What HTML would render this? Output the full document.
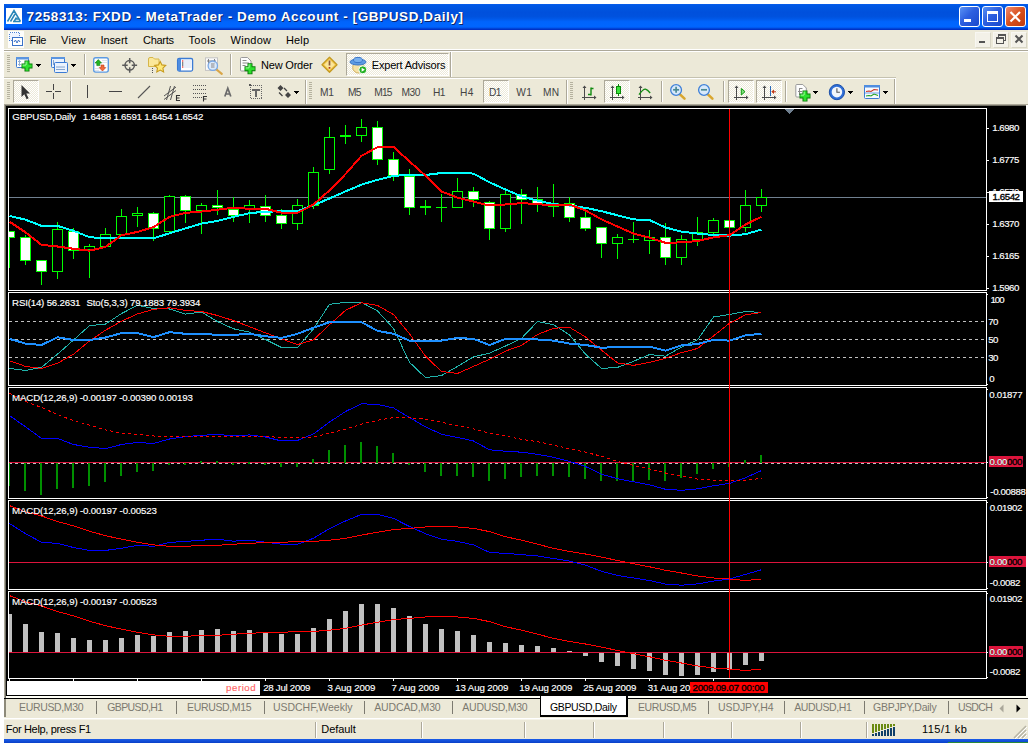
<!DOCTYPE html>
<html><head><meta charset="utf-8"><title>MetaTrader</title><style>
html,body{margin:0;padding:0;background:#fff}
body{width:1032px;height:743px;position:relative;overflow:hidden;font-family:"Liberation Sans",sans-serif;font-size:11px}
.abs{position:absolute}
svg{position:absolute;overflow:visible}
#title{position:absolute;left:4px;top:4px;width:1024px;height:26px;background:linear-gradient(#0a5eea 0%,#0058e6 5%,#0055e0 16%,#0050dc 32%,#0052de 48%,#0058e8 57%,#0064fc 68%,#0066ff 86%,#0058f0 91%,#0040d0 95%,#0028c0 100%)}
#ttext{position:absolute;left:27px;top:8px;font:bold 13px "Liberation Sans",sans-serif;color:#fff;text-shadow:1px 1px 0 #0a2a80;white-space:nowrap;letter-spacing:0.55px}
.cap{position:absolute;top:6px;width:21px;height:21px;box-sizing:border-box;border:1px solid #fff;border-radius:3px;background:linear-gradient(135deg,#5a92f4,#2d5fe0 45%,#1a48cc)}
.capx{background:linear-gradient(135deg,#f08a70,#d8501c 50%,#c03c10)}
#menubar{position:absolute;left:4px;top:30px;width:1024px;height:20px;background:#ece9d8}
.mi{position:absolute;top:33px;font-size:11px;color:#000;white-space:nowrap;line-height:14px}
.mdib{position:absolute;top:32px;width:16px;height:16px;background:#f3f1e8;box-sizing:border-box;border:1px solid #f8f7f2;border-right-color:#d8d5c5;border-bottom-color:#d8d5c5}
.grip{position:absolute;width:3px;height:18px;background:repeating-linear-gradient(#b5b29f 0 1px,#ece9d8 1px 2px)}
.sep{position:absolute;width:1px;height:19px;background:#aca899;box-shadow:1px 0 0 #fff}
.vsep{position:absolute;width:1px;background:#aca899;box-shadow:1px 0 0 #fff}
.dd{position:absolute;width:0;height:0;border-left:3px solid transparent;border-right:3px solid transparent;border-top:3px solid #000}
.tbt{position:absolute;font-size:11px;color:#000;white-space:nowrap;line-height:14px}
.pressed{position:absolute;box-sizing:border-box;border:1px solid #fff;border-top-color:#aca899;border-left-color:#aca899;background:repeating-conic-gradient(#fff 0% 25%,#ece9d8 0% 50%) 0 0/2px 2px}
.per{position:absolute;top:86px;font-size:10px;color:#555;white-space:nowrap;line-height:13px}
.t{position:absolute;line-height:14px;white-space:pre}
.ct{font-size:9.7px;-webkit-text-stroke:0.15px}
.ui{font-size:11px}
.tab{font-size:10.5px}
.pe{font-size:10.2px}
.ttl{font-size:13.5px;font-weight:bold}
.tsep{position:absolute;top:701px;width:1px;height:13px;background:#7c7a70}
.st{position:absolute;top:723px;font-size:11px;line-height:14px;color:#000;white-space:nowrap}
.ssep{position:absolute;top:722px;width:1px;height:16px;background:#aca899;box-shadow:1px 0 0 #fff}
</style></head><body>
<!-- title bar -->
<div id="title"></div>
<div class="abs" style="left:6px;top:8px;width:16px;height:16px;background:#fff"></div>
<svg style="left:6px;top:8px" width="16" height="16" viewBox="0 0 16 16"><path d="M1.500 13.500 L8 2.500 L14.500 13.500 M4.500 13.500 L9 6 M8 13.500 L10.500 9.500 M7 13.500 H14.500 M9.500 11 H12.800" stroke="#2a86b8" stroke-width="1.500" fill="none"/></svg>
<!-- caption buttons -->
<div class="cap" style="left:959px"></div>
<div class="abs" style="left:964px;top:19px;width:7px;height:3px;background:#fff"></div>
<div class="cap" style="left:982px"></div>
<div class="abs" style="left:987px;top:11px;width:11px;height:11px;box-sizing:border-box;border:1px solid #fff;border-top-width:3px"></div>
<div class="cap capx" style="left:1005px"></div>
<svg style="left:1005px;top:6px" width="21" height="21" viewBox="0 0 21 21"><path d="M5.500 6 L15 15.500 M15 6 L5.500 15.500" stroke="#fff" stroke-width="2.200" fill="none"/></svg>
<!-- menu bar -->
<div id="menubar"></div>
<div class="abs" style="left:8px;top:31px;width:16px;height:17px;background:#fdfdfb"></div>
<svg style="left:9px;top:32px" width="15" height="15" viewBox="0 0 15 15" shape-rendering="crispEdges"><rect x="0.500" y="0.500" width="10" height="8" fill="#eef4ff" stroke="#4a82d8" stroke-dasharray="1,1"/><rect x="3.500" y="5.500" width="10" height="8" fill="#fff" stroke="#3a72c8"/><path d="M5 10 l1.500 -2 l1.500 3 l1.500 -3 l1.500 2" stroke="#3a72c8" fill="none" shape-rendering="auto"/></svg>
<!-- mdi buttons -->
<div class="mdib" style="left:975px"></div><div class="abs" style="left:979px;top:41px;width:6px;height:2px;background:#555"></div>
<div class="mdib" style="left:993px"></div>
<div class="abs" style="left:998px;top:34px;width:8px;height:7px;border:1px solid #555;border-top-width:2px;box-sizing:border-box"></div>
<div class="abs" style="left:996px;top:37px;width:8px;height:7px;border:1px solid #555;border-top-width:2px;box-sizing:border-box;background:#f3f1e8"></div>
<div class="mdib" style="left:1011px"></div>
<svg style="left:1014px;top:34px" width="10" height="10" viewBox="0 0 10 10"><path d="M1.500 1.500 L8.500 8.500 M8.500 1.500 L1.500 8.500" stroke="#555" stroke-width="2" fill="none"/></svg>

<div class="abs" style="left:4px;top:50px;width:1024px;height:55px;background:#ece9d8"></div>
<div class="abs" style="left:4px;top:50px;width:1024px;height:1px;background:#aca899"></div>
<div class="abs" style="left:4px;top:51px;width:1024px;height:1px;background:#fff"></div>
<div class="abs" style="left:4px;top:49px;width:1024px;height:1px;background:#fff"></div>
<div class="abs" style="left:4px;top:77px;width:892px;height:1px;background:#c5c2b0"></div>
<div class="abs" style="left:4px;top:78px;width:892px;height:1px;background:#fff"></div>
<div class="abs" style="left:450px;top:52px;width:1px;height:25px;background:#aca899"></div>
<div class="abs" style="left:451px;top:52px;width:1px;height:25px;background:#fff"></div>
<div class="abs" style="left:894px;top:79px;width:1px;height:25px;background:#aca899"></div>
<div class="abs" style="left:895px;top:79px;width:1px;height:25px;background:#fff"></div>
<div class="grip" style="left:7px;top:55px"></div>
<div class="grip" style="left:7px;top:82px"></div>
<div class="grip" style="left:309px;top:82px"></div>
<div class="grip" style="left:570px;top:82px"></div>
<div class="vsep" style="left:305px;top:80px;height:24px"></div>
<div class="vsep" style="left:566px;top:80px;height:24px"></div>
<div class="sep" style="left:84px;top:54px;height:21px"></div>
<div class="sep" style="left:230px;top:54px;height:21px"></div>
<div class="sep" style="left:70px;top:81px;height:21px"></div>
<div class="sep" style="left:661px;top:81px;height:21px"></div>
<div class="sep" style="left:723px;top:81px;height:21px"></div>
<div class="sep" style="left:785px;top:81px;height:21px"></div>
<div class="pressed" style="left:346px;top:53px;width:103px;height:23px"></div>
<div class="pressed" style="left:13px;top:80px;width:26px;height:23px"></div>
<div class="pressed" style="left:483px;top:80px;width:26px;height:23px"></div>
<div class="pressed" style="left:604px;top:80px;width:26px;height:23px"></div>
<div class="pressed" style="left:728px;top:80px;width:26px;height:23px"></div>
<div class="pressed" style="left:756px;top:80px;width:26px;height:23px"></div>
<svg width="1032" height="743" viewBox="0 0 1032 743" style="left:0;top:0"><rect x="16.5" y="57.5" width="12" height="10" rx="1" fill="#fff" stroke="#3b7bd4"/>
<rect x="16" y="57" width="13" height="2.5" fill="#5b95e0"/>
<path d="M19.5 60.5v5M18 62l1.500-1.500 1.500 1.500M18 64l1.500 1.500 1.500-1.500" stroke="#7b9cc8" fill="none" stroke-width=".8"/>
<path d="M27 60.5V71.5M21.5 66H32.5" stroke="#0a7a0a" stroke-width="5.0" stroke-linecap="butt"/>
<path d="M27 61.3V70.7M22.3 66H31.7" stroke="#2ee02e" stroke-width="3.0"/>
<path d="M26.1 61.7V65M22.7 65.1H26" stroke="#a8ffa8" stroke-width="0.9"/>
<path d="M36 64h5v1h-1v1h-1v1h-1v-1h-1v-1h-1z" fill="#000" shape-rendering="crispEdges"/>
<rect x="51.500" y="57.500" width="13" height="10" rx="1" fill="#eaf2fd" stroke="#3b7bd4"/>
<rect x="51" y="57" width="14" height="2" fill="#5b95e0"/>
<path d="M53.500 60v5M54 63.500h8" stroke="#7b9cc8" stroke-width=".9"/>
<rect x="54.500" y="62.500" width="13" height="10" rx="1" fill="#eaf2fd" stroke="#3b7bd4"/>
<path d="M56 69.500h9M56 67h9" stroke="#7b9cc8" stroke-width=".9"/>
<path d="M71 64h5v1h-1v1h-1v1h-1v-1h-1v-1h-1z" fill="#000" shape-rendering="crispEdges"/>
<rect x="93.700" y="57.700" width="14.600" height="14.400" rx="2" fill="#fdfdfd" stroke="#5d9be2" stroke-width="1.400"/>
<path d="M102 60.500h5M102 62.500h5M95 68.500h4M95 70.500h4" stroke="#d4dbe6" stroke-width=".8"/>
<path d="M98.300 59.600 L101.600 63 H99.800 V65.600 H96.800 V63 H95 Z" fill="#22b422" stroke="#0c7c0c" stroke-width=".6"/>
<path d="M102.500 71 L99.200 67.600 H101 V65 H104 V67.600 H105.800 Z" fill="#f06a3c" stroke="#c23a14" stroke-width=".6"/>
<circle cx="129.700" cy="65.300" r="4.700" fill="none" stroke="#5a5a5a" stroke-width="1.500"/>
<path d="M129.700 58v5.300M129.700 67.300v5.400M122.200 65.300h5.500M131.700 65.300h5.400" stroke="#5a5a5a" stroke-width="1.500"/>
<path d="M148.500 59 q0-1.500 1.500-1.500 h3 l1.500 1.500 h4.500 v7.500 h-10.500z" fill="#fbe89a" stroke="#d6b64a" stroke-width="1"/>
<path d="M152.500 68v1M152.500 70v1M152.500 72v1" stroke="#555" stroke-width="1"/>
<path d="M160.200 61.400 l1.700 3.500 3.800.5 -2.800 2.700 .7 3.800 -3.400-1.800 -3.400 1.800 .7-3.800 -2.800-2.700 3.800-.5z" fill="#ffe97a" stroke="#c79a1c" stroke-width="1.100"/>
<rect x="177.600" y="58.500" width="15" height="12.600" rx="1.500" fill="#fff" stroke="#3b7bd4" stroke-width="1.300"/>
<rect x="178" y="59" width="3" height="12" fill="#4f8de0"/>
<path d="M183.500 61h8M183.500 63h8M183.500 65h8M183.500 67h8" stroke="#c4d4f0" stroke-width=".8"/>
<rect x="182" y="60.400" width="1.300" height="1.200" fill="#e02020"/><rect x="182" y="62.400" width="1.300" height="1.200" fill="#333"/><rect x="182" y="64.400" width="1.300" height="1.200" fill="#333"/><rect x="182" y="66.400" width="1.300" height="1.200" fill="#e02020"/>
<rect x="205.500" y="57.800" width="12" height="12.600" fill="#fafafa" stroke="#c4c4c4"/>
<path d="M208.500 59v5M214.500 59v5M207 61h9" stroke="#777" stroke-width=".9"/>
<path d="M216.500 69.500 L221.800 73.800" stroke="#d9a648" stroke-width="2.200" stroke-linecap="round"/>
<circle cx="212.800" cy="65.700" r="4.700" fill="#d5e6fa" fill-opacity=".85" stroke="#7aa8e4" stroke-width="1.300"/>
<rect x="211" y="63" width="3.500" height="5" fill="#b4b8c0"/>
<path d="M240.500 58.500 q0-1 1-1 h6 l3.500 3.500 v9 q0 1-1 1 h-8.500 q-1 0-1-1z" fill="#fdfdfd" stroke="#9a9a9a"/>
<path d="M242.500 60.500h4M242.500 63h6.500M242.500 65.500h3" stroke="#8a8a8a" stroke-width="1"/>
<path d="M250 63.3V74.3M244.5 68.8H255.5" stroke="#0a7a0a" stroke-width="5.0" stroke-linecap="butt"/>
<path d="M250 64.1V73.5M245.3 68.8H254.7" stroke="#2ee02e" stroke-width="3.0"/>
<path d="M249.1 64.5V67.8M245.7 67.89999999999999H249" stroke="#a8ffa8" stroke-width="0.9"/>
<path d="M329.500 57.300 L337 64.800 L329.500 72.300 L322 64.800Z" fill="#f4c84a" stroke="#c49a22" stroke-width="1.300" stroke-linejoin="round"/>
<path d="M329.500 59.500 L334.800 64.800 L329.500 70.100 L324.200 64.800Z" fill="#fbe59a"/>
<path d="M329.500 60.500v5" stroke="#8a5a3a" stroke-width="1.700"/><path d="M329.500 67v1.700" stroke="#b03818" stroke-width="1.700"/>
<ellipse cx="358.500" cy="67.500" rx="5.800" ry="5.500" fill="#f6e2a6" stroke="#d0b060"/>
<ellipse cx="358" cy="62" rx="8" ry="3" fill="#5d9be2" stroke="#3a76c8"/>
<ellipse cx="358" cy="60" rx="4.500" ry="2.600" fill="#78b0ee" stroke="#3a76c8"/>
<circle cx="362.800" cy="69.800" r="4" fill="#22b022" stroke="#fff" stroke-width="1"/>
<path d="M361.600 67.800 L364.900 69.800 L361.600 71.800Z" fill="#fff"/>
<path d="M21.500 85 V97 L24.300 94.300 L26.600 99.200 L28.600 98.200 L26.300 93.500 L30 93.500Z" fill="#333"/>
<path d="M53.500 84v6M53.500 93v6M46 91.500h6M55 91.500h6" stroke="#444" stroke-width="1" shape-rendering="crispEdges"/>
<rect x="87" y="85" width="1" height="13" fill="#444"/>
<rect x="109" y="91" width="13" height="1" fill="#444"/>
<path d="M138 98 L150 86" stroke="#555" stroke-width="1.100"/>
<path d="M164 96 L176 87 M164 99.500 L176 90.500 M166.500 100 L170.500 86 M170.500 100 L174.500 86" stroke="#555" stroke-width="1"/>
<path d="M180 95.500h-3.500v5h3.500M176.500 98h3" stroke="#333" stroke-width="1.100" fill="none"/>
<path d="M193 85.500h14M193 89.500h14M193 93.500h14M193 97.500h9" stroke="#555" stroke-dasharray="1,1" shape-rendering="crispEdges"/>
<path d="M207 96.500h-3.500v5M203.500 99h3" stroke="#333" stroke-width="1.100" fill="none"/>
<path d="M224.800 96.500 L227.800 88.300 L230.800 96.500 M225.800 94 H229.800" stroke="#6a6a6a" stroke-width="1.700" fill="none" stroke-linejoin="miter"/>
<rect x="250.500" y="85.500" width="11" height="13" fill="none" stroke="#666" stroke-dasharray="1,1" shape-rendering="crispEdges"/>
<rect x="249" y="84" width="2" height="2" fill="#555"/>
<rect x="252" y="89" width="8" height="2" fill="#666" shape-rendering="crispEdges"/><rect x="255" y="89" width="2" height="8" fill="#666" shape-rendering="crispEdges"/>
<path d="M280.500 85 L283.500 88 L280.500 91 L277.500 88Z M288 92 L291 95 L288 98 L285 95Z" fill="#444"/>
<path d="M279 92.500 L282.500 96 M284 88 l3 3" stroke="#444" stroke-width="1.300"/>
<path d="M294 91h5v1h-1v1h-1v1h-1v-1h-1v-1h-1z" fill="#000" shape-rendering="crispEdges"/>
<path d="M584.5 87V100M582 97.500H595" stroke="#4a4a4a" stroke-width="1" shape-rendering="crispEdges"/>
<path d="M584.5 85.500l-2 2.500h4zM596.5 97.500l-2.500-2v4z" fill="#4a4a4a"/>
<path d="M591 87.500v8" stroke="#108a10" stroke-width="1.400"/><path d="M591 88.500h2.500M588 94.500h3" stroke="#108a10" stroke-width="1.300"/>
<path d="M612.5 87V100M610 97.500H623" stroke="#4a4a4a" stroke-width="1" shape-rendering="crispEdges"/>
<path d="M612.5 85.500l-2 2.500h4zM624.5 97.500l-2.500-2v4z" fill="#4a4a4a"/>
<path d="M618.500 84v12" stroke="#0a8a0a" stroke-width="1"/><rect x="616.500" y="86.500" width="4" height="7" fill="#3ae03a" stroke="#0a8a0a"/>
<path d="M640.5 87V100M638 97.500H651" stroke="#4a4a4a" stroke-width="1" shape-rendering="crispEdges"/>
<path d="M640.5 85.500l-2 2.500h4zM652.5 97.500l-2.500-2v4z" fill="#4a4a4a"/>
<path d="M639 94.600 Q643 89 645.500 89.200 Q647.500 89.800 650.200 93" stroke="#108a10" stroke-width="1.300" fill="none"/>
<path d="M679.7 94.1 L684.5 98.6" stroke="#d9a62e" stroke-width="2.600" stroke-linecap="round"/>
<circle cx="676.1" cy="90" r="5.400" fill="#d8e9fb" stroke="#3f80d8" stroke-width="1.300"/>
<path d="M673.1 89.800h6" stroke="#4a8a94" stroke-width="1.700"/>
<path d="M676.1 86.800v6" stroke="#4a8a94" stroke-width="1.700"/>
<path d="M707.6 94.1 L712.4 98.6" stroke="#d9a62e" stroke-width="2.600" stroke-linecap="round"/>
<circle cx="704" cy="90" r="5.400" fill="#d8e9fb" stroke="#3f80d8" stroke-width="1.300"/>
<path d="M701 89.800h6" stroke="#4a8a94" stroke-width="1.700"/>
<path d="M736.5 87V100M734 97.500H747" stroke="#4a4a4a" stroke-width="1" shape-rendering="crispEdges"/>
<path d="M736.5 85.500l-2 2.500h4zM748.5 97.500l-2.500-2v4z" fill="#4a4a4a"/>
<path d="M741.300 88.500 L745 91.700 L741.300 95Z" fill="#7ee07e" stroke="#109a10" stroke-width="1"/>
<path d="M764.5 87V100M762 97.500H775" stroke="#4a4a4a" stroke-width="1" shape-rendering="crispEdges"/>
<path d="M764.5 85.500l-2 2.500h4zM776.5 97.500l-2.500-2v4z" fill="#4a4a4a"/>
<path d="M770.500 86v10" stroke="#2a6ab8" stroke-width="1" shape-rendering="crispEdges"/><path d="M776 91.800h-3" stroke="#c03818" stroke-width="1"/><path d="M771.300 91.800l2.700-2.300v4.600z" fill="#c03818"/>
<path d="M795.800 85.500 q0-1 1-1 h6 l3.500 3.500 v8 q0 1-1 1 h-8.500 q-1 0-1-1z" fill="#fdfdfd" stroke="#9a9a9a"/>
<path d="M799.500 88v7M799.500 88.500h3M798 91.500h4" stroke="#8a8a8a" stroke-width="1" fill="none"/>
<path d="M805 90.5V101.5M799.5 96H810.5" stroke="#0a7a0a" stroke-width="5.0" stroke-linecap="butt"/>
<path d="M805 91.3V100.7M800.3 96H809.7" stroke="#2ee02e" stroke-width="3.0"/>
<path d="M804.1 91.7V95M800.7 95.1H804" stroke="#a8ffa8" stroke-width="0.9"/>
<path d="M813 91h5v1h-1v1h-1v1h-1v-1h-1v-1h-1z" fill="#000" shape-rendering="crispEdges"/>
<circle cx="836.900" cy="92.100" r="7.600" fill="#2f6fd8" stroke="#1c4fa8" stroke-width="1"/>
<circle cx="836.900" cy="92.100" r="5.300" fill="#f2f6fc"/>
<path d="M836.900 88.300v4h3" stroke="#555" stroke-width="1.100" fill="none"/>
<path d="M848 91h5v1h-1v1h-1v1h-1v-1h-1v-1h-1z" fill="#000" shape-rendering="crispEdges"/>
<rect x="864.500" y="85.500" width="15" height="13" rx="1" fill="#f6f9fe" stroke="#3b7bd4"/>
<rect x="864" y="85" width="16" height="2.500" fill="#4f8de0"/>
<path d="M866 91.500 l3-.5 2 .5 3-2 4 .5" stroke="#c83020" fill="none" stroke-width="1.100"/>
<path d="M866 96 l3-.5 2 .5 3-2 4 1.500" stroke="#20a020" fill="none" stroke-width="1.100"/>
<path d="M865 93h14" stroke="#4f8de0" stroke-width=".8"/>
<path d="M883 91h5v1h-1v1h-1v1h-1v-1h-1v-1h-1z" fill="#000" shape-rendering="crispEdges"/></svg>
<svg id="chart" width="1032" height="743" viewBox="0 0 1032 743" shape-rendering="crispEdges" style="position:absolute;left:0;top:0">
<rect x="4" y="104" width="1024" height="594" fill="#aca899"/>
<rect x="5" y="105" width="1023" height="593" fill="#716f64"/>
<rect x="1026" y="105" width="2" height="593" fill="#fff"/>
<rect x="6" y="106" width="1020" height="590" fill="#000"/>
<rect x="7" y="681" width="253" height="14" fill="#fff"/>
<rect x="8.5" y="108.5" width="978" height="182" fill="none" stroke="#fff" stroke-width="1"/>
<rect x="8.5" y="292.5" width="978" height="93" fill="none" stroke="#fff" stroke-width="1"/>
<rect x="8.5" y="387.5" width="978" height="111" fill="none" stroke="#fff" stroke-width="1"/>
<rect x="8.5" y="500.5" width="978" height="89" fill="none" stroke="#fff" stroke-width="1"/>
<rect x="8.5" y="591.5" width="978" height="87" fill="none" stroke="#fff" stroke-width="1"/>
<rect x="9" y="197" width="977" height="1" fill="#708090"/>
<polygon points="784.6,109 794.4,109 789.5,113.9" fill="#708090"/>
<rect x="9" y="231" width="1" height="37" fill="#00ff00"/>
<rect x="9" y="231" width="6" height="7" fill="#00ff00"/>
<rect x="9" y="232" width="5" height="5" fill="#fff"/>
<rect x="25" y="235" width="1" height="30" fill="#00ff00"/>
<rect x="20" y="237" width="11" height="24" fill="#00ff00"/>
<rect x="21" y="238" width="9" height="22" fill="#fff"/>
<rect x="41" y="260" width="1" height="25" fill="#00ff00"/>
<rect x="36" y="260" width="11" height="12" fill="#00ff00"/>
<rect x="37" y="261" width="9" height="10" fill="#fff"/>
<rect x="57" y="222" width="1" height="57" fill="#00ff00"/>
<rect x="52" y="229" width="11" height="43" fill="#00ff00"/>
<rect x="53" y="230" width="9" height="41" fill="#000"/>
<rect x="73" y="228" width="1" height="31" fill="#00ff00"/>
<rect x="68" y="231" width="11" height="20" fill="#00ff00"/>
<rect x="69" y="232" width="9" height="18" fill="#fff"/>
<rect x="89" y="244" width="1" height="34" fill="#00ff00"/>
<rect x="84" y="246" width="11" height="4" fill="#00ff00"/>
<rect x="85" y="247" width="9" height="2" fill="#000"/>
<rect x="105" y="228" width="1" height="19" fill="#00ff00"/>
<rect x="100" y="234" width="11" height="13" fill="#00ff00"/>
<rect x="101" y="235" width="9" height="11" fill="#000"/>
<rect x="121" y="209" width="1" height="26" fill="#00ff00"/>
<rect x="116" y="216" width="11" height="19" fill="#00ff00"/>
<rect x="117" y="217" width="9" height="17" fill="#000"/>
<rect x="137" y="207" width="1" height="20" fill="#00ff00"/>
<rect x="132" y="213" width="11" height="3" fill="#00ff00"/>
<rect x="133" y="214" width="9" height="1" fill="#000"/>
<rect x="153" y="212" width="1" height="29" fill="#00ff00"/>
<rect x="148" y="213" width="11" height="16" fill="#00ff00"/>
<rect x="149" y="214" width="9" height="14" fill="#fff"/>
<rect x="169" y="195" width="1" height="37" fill="#00ff00"/>
<rect x="164" y="196" width="11" height="36" fill="#00ff00"/>
<rect x="165" y="197" width="9" height="34" fill="#000"/>
<rect x="185" y="195" width="1" height="28" fill="#00ff00"/>
<rect x="180" y="196" width="11" height="15" fill="#00ff00"/>
<rect x="181" y="197" width="9" height="13" fill="#fff"/>
<rect x="201" y="203" width="1" height="31" fill="#00ff00"/>
<rect x="196" y="205" width="11" height="6" fill="#00ff00"/>
<rect x="197" y="206" width="9" height="4" fill="#000"/>
<rect x="217" y="190" width="1" height="25" fill="#00ff00"/>
<rect x="212" y="205" width="11" height="3" fill="#00ff00"/>
<rect x="213" y="206" width="9" height="1" fill="#fff"/>
<rect x="233" y="197" width="1" height="25" fill="#00ff00"/>
<rect x="228" y="209" width="11" height="7" fill="#00ff00"/>
<rect x="229" y="210" width="9" height="5" fill="#fff"/>
<rect x="249" y="200" width="1" height="23" fill="#00ff00"/>
<rect x="244" y="205" width="11" height="4" fill="#00ff00"/>
<rect x="245" y="206" width="9" height="2" fill="#000"/>
<rect x="265" y="195" width="1" height="27" fill="#00ff00"/>
<rect x="260" y="206" width="11" height="10" fill="#00ff00"/>
<rect x="261" y="207" width="9" height="8" fill="#fff"/>
<rect x="281" y="209" width="1" height="20" fill="#00ff00"/>
<rect x="276" y="215" width="11" height="9" fill="#00ff00"/>
<rect x="277" y="216" width="9" height="7" fill="#fff"/>
<rect x="297" y="199" width="1" height="31" fill="#00ff00"/>
<rect x="292" y="205" width="11" height="19" fill="#00ff00"/>
<rect x="293" y="206" width="9" height="17" fill="#000"/>
<rect x="313" y="167" width="1" height="42" fill="#00ff00"/>
<rect x="308" y="172" width="11" height="34" fill="#00ff00"/>
<rect x="309" y="173" width="9" height="32" fill="#000"/>
<rect x="329" y="127" width="1" height="47" fill="#00ff00"/>
<rect x="324" y="137" width="11" height="33" fill="#00ff00"/>
<rect x="325" y="138" width="9" height="31" fill="#000"/>
<rect x="345" y="125" width="1" height="19" fill="#00ff00"/>
<rect x="340" y="135" width="11" height="2" fill="#00ff00"/>
<rect x="361" y="119" width="1" height="23" fill="#00ff00"/>
<rect x="356" y="127" width="11" height="9" fill="#00ff00"/>
<rect x="357" y="128" width="9" height="7" fill="#000"/>
<rect x="377" y="121" width="1" height="44" fill="#00ff00"/>
<rect x="372" y="127" width="11" height="33" fill="#00ff00"/>
<rect x="373" y="128" width="9" height="31" fill="#fff"/>
<rect x="393" y="152" width="1" height="29" fill="#00ff00"/>
<rect x="388" y="159" width="11" height="17" fill="#00ff00"/>
<rect x="389" y="160" width="9" height="15" fill="#fff"/>
<rect x="409" y="169" width="1" height="46" fill="#00ff00"/>
<rect x="404" y="176" width="11" height="32" fill="#00ff00"/>
<rect x="405" y="177" width="9" height="30" fill="#fff"/>
<rect x="425" y="200" width="1" height="15" fill="#00ff00"/>
<rect x="420" y="206" width="11" height="2" fill="#00ff00"/>
<rect x="441" y="194" width="1" height="28" fill="#00ff00"/>
<rect x="436" y="207" width="11" height="1" fill="#00ff00"/>
<rect x="457" y="178" width="1" height="30" fill="#00ff00"/>
<rect x="452" y="191" width="11" height="17" fill="#00ff00"/>
<rect x="453" y="192" width="9" height="15" fill="#000"/>
<rect x="473" y="187" width="1" height="20" fill="#00ff00"/>
<rect x="468" y="191" width="11" height="9" fill="#00ff00"/>
<rect x="469" y="192" width="9" height="7" fill="#fff"/>
<rect x="489" y="201" width="1" height="39" fill="#00ff00"/>
<rect x="484" y="202" width="11" height="27" fill="#00ff00"/>
<rect x="485" y="203" width="9" height="25" fill="#fff"/>
<rect x="505" y="191" width="1" height="41" fill="#00ff00"/>
<rect x="500" y="194" width="11" height="35" fill="#00ff00"/>
<rect x="501" y="195" width="9" height="33" fill="#000"/>
<rect x="521" y="189" width="1" height="35" fill="#00ff00"/>
<rect x="516" y="194" width="11" height="6" fill="#00ff00"/>
<rect x="517" y="195" width="9" height="4" fill="#fff"/>
<rect x="537" y="187" width="1" height="25" fill="#00ff00"/>
<rect x="532" y="199" width="11" height="5" fill="#00ff00"/>
<rect x="533" y="200" width="9" height="3" fill="#fff"/>
<rect x="553" y="184" width="1" height="33" fill="#00ff00"/>
<rect x="548" y="203" width="11" height="4" fill="#00ff00"/>
<rect x="549" y="204" width="9" height="2" fill="#fff"/>
<rect x="569" y="197" width="1" height="25" fill="#00ff00"/>
<rect x="564" y="203" width="11" height="15" fill="#00ff00"/>
<rect x="565" y="204" width="9" height="13" fill="#fff"/>
<rect x="585" y="212" width="1" height="19" fill="#00ff00"/>
<rect x="580" y="217" width="11" height="12" fill="#00ff00"/>
<rect x="581" y="218" width="9" height="10" fill="#fff"/>
<rect x="601" y="227" width="1" height="31" fill="#00ff00"/>
<rect x="596" y="227" width="11" height="17" fill="#00ff00"/>
<rect x="597" y="228" width="9" height="15" fill="#fff"/>
<rect x="617" y="234" width="1" height="25" fill="#00ff00"/>
<rect x="612" y="237" width="11" height="7" fill="#00ff00"/>
<rect x="613" y="238" width="9" height="5" fill="#000"/>
<rect x="633" y="222" width="1" height="21" fill="#00ff00"/>
<rect x="628" y="239" width="11" height="1" fill="#00ff00"/>
<rect x="649" y="230" width="1" height="24" fill="#00ff00"/>
<rect x="644" y="237" width="11" height="4" fill="#00ff00"/>
<rect x="645" y="238" width="9" height="2" fill="#000"/>
<rect x="665" y="223" width="1" height="42" fill="#00ff00"/>
<rect x="660" y="237" width="11" height="21" fill="#00ff00"/>
<rect x="661" y="238" width="9" height="19" fill="#fff"/>
<rect x="681" y="235" width="1" height="30" fill="#00ff00"/>
<rect x="676" y="239" width="11" height="19" fill="#00ff00"/>
<rect x="677" y="240" width="9" height="17" fill="#000"/>
<rect x="697" y="217" width="1" height="29" fill="#00ff00"/>
<rect x="692" y="232" width="11" height="8" fill="#00ff00"/>
<rect x="693" y="233" width="9" height="6" fill="#000"/>
<rect x="713" y="218" width="1" height="17" fill="#00ff00"/>
<rect x="708" y="220" width="11" height="13" fill="#00ff00"/>
<rect x="709" y="221" width="9" height="11" fill="#000"/>
<rect x="729" y="218" width="1" height="13" fill="#00ff00"/>
<rect x="724" y="220" width="11" height="8" fill="#00ff00"/>
<rect x="725" y="221" width="9" height="6" fill="#fff"/>
<rect x="745" y="190" width="1" height="42" fill="#00ff00"/>
<rect x="740" y="205" width="11" height="23" fill="#00ff00"/>
<rect x="741" y="206" width="9" height="21" fill="#000"/>
<rect x="761" y="189" width="1" height="23" fill="#00ff00"/>
<rect x="756" y="197" width="11" height="9" fill="#00ff00"/>
<rect x="757" y="198" width="9" height="7" fill="#000"/>
<polyline points="9.5,215.9 25.5,219.7 41.5,225.9 57.5,225.9 73.5,230.8 89.5,237.2 105.5,238.3 121.5,238.3 137.5,238.3 153.5,238.3 169.5,233.3 185.5,228.4 201.5,223.6 217.5,220.9 233.5,216.8 249.5,213.2 265.5,211.6 281.5,211.4 297.5,211.2 313.5,205.2 329.5,198.5 345.5,191.4 361.5,184.7 377.5,179.8 393.5,175.8 409.5,175.0 425.5,175.0 441.5,173.0 457.5,172.6 473.5,173.6 489.5,182.3 505.5,189.5 521.5,196.4 537.5,200.6 553.5,204.1 569.5,205.5 585.5,207.8 601.5,211.2 617.5,215.3 633.5,219.4 649.5,220.0 665.5,227.5 681.5,231.6 697.5,233.6 713.5,235.0 729.5,235.6 745.5,234.2 761.5,229.5" fill="none" stroke="#00ffff" stroke-width="2" />
<polyline points="9.5,221.7 25.5,232.3 41.5,244.9 57.5,246.5 73.5,248.8 89.5,250.7 105.5,246.9 121.5,235.2 137.5,231.9 153.5,227.1 169.5,216.8 185.5,212.9 201.5,211.6 217.5,209.7 233.5,207.7 249.5,208.8 265.5,208.8 281.5,212.7 297.5,212.7 313.5,204.6 329.5,190.4 345.5,174.1 361.5,155.8 377.5,147.2 393.5,146.9 409.5,161.4 425.5,175.6 441.5,191.5 457.5,197.6 473.5,201.7 489.5,205.5 505.5,204.5 521.5,203.1 537.5,204.1 553.5,205.5 569.5,204.7 585.5,210.4 601.5,219.4 617.5,226.5 633.5,233.6 649.5,237.7 665.5,242.8 681.5,242.4 697.5,241.1 713.5,237.3 729.5,235.2 745.5,224.5 761.5,216.7" fill="none" stroke="#ff0000" stroke-width="2" />
<line x1="9" x2="986" y1="321.5" y2="321.5" stroke="#c0c0c0" stroke-width="1" stroke-dasharray="3,3"/>
<line x1="9" x2="986" y1="339.5" y2="339.5" stroke="#c0c0c0" stroke-width="1" stroke-dasharray="3,3"/>
<line x1="9" x2="986" y1="357.5" y2="357.5" stroke="#c0c0c0" stroke-width="1" stroke-dasharray="3,3"/>
<polyline points="9.5,368.4 25.5,370.5 41.5,367.4 57.5,354.2 73.5,340.0 89.5,325.7 105.5,324.1 121.5,313.5 137.5,305.4 153.5,308.4 169.5,309.0 185.5,314.1 201.5,312.0 217.5,321.6 233.5,328.8 249.5,332.2 265.5,339.5 281.5,347.5 297.5,347.5 313.5,328.8 329.5,304.3 345.5,302.3 361.5,302.3 377.5,311.0 393.5,328.5 409.5,362.3 425.5,377.6 441.5,375.6 457.5,366.4 473.5,356.8 489.5,353.2 505.5,346.0 521.5,338.3 537.5,321.6 553.5,324.7 569.5,334.9 585.5,354.2 601.5,368.4 617.5,367.4 633.5,361.3 649.5,354.6 665.5,356.2 681.5,347.1 697.5,339.9 713.5,317.0 729.5,314.5 745.5,311.5 761.5,312.5" fill="none" stroke="#20b2aa" stroke-width="1" />
<polyline points="9.5,360.7 25.5,366.4 41.5,368.4 57.5,363.3 73.5,354.2 89.5,341.0 105.5,330.2 121.5,321.2 137.5,313.9 153.5,309.4 169.5,307.8 185.5,310.4 201.5,311.5 217.5,315.5 233.5,320.6 249.5,326.7 265.5,332.8 281.5,338.9 297.5,344.6 313.5,339.9 329.5,324.7 345.5,310.4 361.5,302.7 377.5,305.4 393.5,314.5 409.5,333.8 425.5,356.2 441.5,371.5 457.5,373.5 473.5,366.4 489.5,359.3 505.5,351.1 521.5,345.4 537.5,334.5 553.5,328.3 569.5,327.3 585.5,336.9 601.5,350.1 617.5,362.9 633.5,365.4 649.5,362.3 665.5,358.3 681.5,352.6 697.5,348.5 713.5,335.9 729.5,323.3 745.5,314.9 761.5,312.5" fill="none" stroke="#ff0000" stroke-width="1" />
<polyline points="9.5,338.9 25.5,343.6 41.5,345.0 57.5,337.3 73.5,340.0 89.5,340.0 105.5,337.5 121.5,333.2 137.5,333.2 153.5,337.1 169.5,332.2 185.5,333.8 201.5,333.8 217.5,334.9 233.5,334.9 249.5,333.8 265.5,336.3 281.5,337.9 297.5,333.8 313.5,327.7 329.5,322.2 345.5,322.2 361.5,322.2 377.5,330.8 393.5,333.8 409.5,340.6 425.5,340.6 441.5,340.6 457.5,337.9 473.5,338.9 489.5,345.0 505.5,338.9 521.5,338.9 537.5,339.5 553.5,340.6 569.5,343.6 585.5,345.0 601.5,347.7 617.5,347.1 633.5,346.7 649.5,346.7 665.5,350.7 681.5,345.4 697.5,344.0 713.5,339.9 729.5,340.6 745.5,335.3 761.5,333.8" fill="none" stroke="#1e90ff" stroke-width="2" />
<rect x="9" y="462" width="977" height="1" fill="#dc143c"/>
<line x1="9" x2="986" y1="463.5" y2="463.5" stroke="#c0c0c0" stroke-width="1" stroke-dasharray="3,3"/>
<rect x="9" y="463" width="1" height="23" fill="#009000"/>
<rect x="24" y="463" width="2" height="28" fill="#009000"/>
<rect x="40" y="463" width="2" height="32" fill="#009000"/>
<rect x="56" y="463" width="2" height="26" fill="#009000"/>
<rect x="72" y="463" width="2" height="25" fill="#009000"/>
<rect x="88" y="463" width="2" height="23" fill="#009000"/>
<rect x="104" y="463" width="2" height="19" fill="#009000"/>
<rect x="120" y="463" width="2" height="13" fill="#009000"/>
<rect x="136" y="463" width="2" height="9" fill="#009000"/>
<rect x="152" y="463" width="2" height="8" fill="#009000"/>
<rect x="168" y="463" width="2" height="2" fill="#009000"/>
<rect x="184" y="463" width="2" height="2" fill="#009000"/>
<rect x="200" y="461" width="2" height="2" fill="#009000"/>
<rect x="216" y="461" width="2" height="2" fill="#009000"/>
<rect x="232" y="463" width="2" height="2" fill="#009000"/>
<rect x="248" y="462" width="2" height="2" fill="#009000"/>
<rect x="264" y="463" width="2" height="2" fill="#009000"/>
<rect x="280" y="463" width="2" height="4" fill="#009000"/>
<rect x="296" y="463" width="2" height="4" fill="#009000"/>
<rect x="312" y="459" width="2" height="4" fill="#009000"/>
<rect x="328" y="450" width="2" height="13" fill="#009000"/>
<rect x="344" y="445" width="2" height="18" fill="#009000"/>
<rect x="360" y="442" width="2" height="21" fill="#009000"/>
<rect x="376" y="446" width="2" height="17" fill="#009000"/>
<rect x="392" y="453" width="2" height="10" fill="#009000"/>
<rect x="408" y="463" width="2" height="2" fill="#009000"/>
<rect x="424" y="463" width="2" height="9" fill="#009000"/>
<rect x="440" y="463" width="2" height="13" fill="#009000"/>
<rect x="456" y="463" width="2" height="13" fill="#009000"/>
<rect x="472" y="463" width="2" height="14" fill="#009000"/>
<rect x="488" y="463" width="2" height="18" fill="#009000"/>
<rect x="504" y="463" width="2" height="16" fill="#009000"/>
<rect x="520" y="463" width="2" height="14" fill="#009000"/>
<rect x="536" y="463" width="2" height="13" fill="#009000"/>
<rect x="552" y="463" width="2" height="13" fill="#009000"/>
<rect x="568" y="463" width="2" height="14" fill="#009000"/>
<rect x="584" y="463" width="2" height="16" fill="#009000"/>
<rect x="600" y="463" width="2" height="18" fill="#009000"/>
<rect x="616" y="463" width="2" height="18" fill="#009000"/>
<rect x="632" y="463" width="2" height="18" fill="#009000"/>
<rect x="648" y="463" width="2" height="17" fill="#009000"/>
<rect x="664" y="463" width="2" height="18" fill="#009000"/>
<rect x="680" y="463" width="2" height="15" fill="#009000"/>
<rect x="696" y="463" width="2" height="11" fill="#009000"/>
<rect x="712" y="463" width="2" height="6" fill="#009000"/>
<rect x="728" y="463" width="2" height="4" fill="#009000"/>
<rect x="744" y="460" width="2" height="3" fill="#009000"/>
<rect x="760" y="455" width="2" height="8" fill="#009000"/>
<polyline points="9.5,415.6 25.5,426.8 41.5,438.4 57.5,438.4 73.5,444.5 89.5,447.2 105.5,448.6 121.5,444.5 137.5,442.5 153.5,443.5 169.5,439.0 185.5,436.6 201.5,435.4 217.5,434.3 233.5,436.0 249.5,434.9 265.5,437.0 281.5,441.0 297.5,440.4 313.5,433.9 329.5,422.1 345.5,411.5 361.5,403.8 377.5,404.4 393.5,407.9 409.5,417.6 425.5,426.8 441.5,434.3 457.5,437.4 473.5,441.0 489.5,449.8 505.5,451.2 521.5,452.2 537.5,454.3 553.5,457.3 569.5,461.4 585.5,466.5 601.5,474.2 617.5,478.7 633.5,481.8 649.5,484.8 665.5,489.3 681.5,490.3 697.5,488.9 713.5,485.8 729.5,483.4 745.5,477.7 761.5,470.6" fill="none" stroke="#0000ff" stroke-width="1" />
<polyline points="9.5,393.2 25.5,401.4 41.5,407.5 57.5,414.6 73.5,420.7 89.5,425.2 105.5,429.9 121.5,433.3 137.5,434.5 153.5,436.0 169.5,436.4 185.5,436.4 201.5,436.4 217.5,436.4 233.5,436.4 249.5,436.4 265.5,436.4 281.5,437.6 297.5,437.6 313.5,437.0 329.5,433.3 345.5,429.2 361.5,424.2 377.5,420.3 393.5,417.6 409.5,417.6 425.5,419.3 441.5,422.3 457.5,425.8 473.5,428.8 489.5,433.3 505.5,436.0 521.5,439.4 537.5,441.7 553.5,445.1 569.5,448.8 585.5,452.2 601.5,456.3 617.5,461.4 633.5,465.5 649.5,468.9 665.5,473.0 681.5,476.1 697.5,479.1 713.5,480.3 729.5,481.1 745.5,480.3 761.5,478.3" fill="none" stroke="#ff0000" stroke-width="1" stroke-dasharray="3,3" />
<rect x="9" y="562" width="977" height="1" fill="#dc143c"/>
<polyline points="9.5,523.5 25.5,533.7 41.5,542.2 57.5,543.4 73.5,547.5 89.5,550.4 105.5,550.4 121.5,548.3 137.5,545.3 153.5,546.3 169.5,542.4 185.5,541.4 201.5,540.2 217.5,539.2 233.5,541.2 249.5,540.2 265.5,542.2 281.5,544.2 297.5,544.2 313.5,538.3 329.5,528.6 345.5,521.0 361.5,514.3 377.5,514.3 393.5,518.4 409.5,526.5 425.5,533.7 441.5,539.2 457.5,541.4 473.5,544.9 489.5,552.4 505.5,553.4 521.5,554.6 537.5,556.0 553.5,558.5 569.5,561.1 585.5,565.2 601.5,571.3 617.5,575.4 633.5,578.0 649.5,580.5 665.5,584.1 681.5,585.2 697.5,583.9 713.5,581.1 729.5,579.0 745.5,574.4 761.5,569.7" fill="none" stroke="#0000ff" stroke-width="1" />
<polyline points="9.5,505.6 25.5,511.9 41.5,516.0 57.5,521.5 73.5,525.9 89.5,531.2 105.5,535.7 121.5,539.2 137.5,542.2 153.5,544.9 169.5,546.3 185.5,546.3 201.5,545.5 217.5,545.3 233.5,544.2 249.5,543.4 265.5,542.4 281.5,542.4 297.5,541.4 313.5,541.4 329.5,540.2 345.5,538.3 361.5,535.1 377.5,532.2 393.5,529.6 409.5,528.4 425.5,527.0 441.5,526.4 457.5,527.0 473.5,528.4 489.5,531.6 505.5,536.7 521.5,540.2 537.5,544.2 553.5,548.3 569.5,551.4 585.5,554.0 601.5,557.1 617.5,560.5 633.5,563.8 649.5,566.8 665.5,570.3 681.5,573.0 697.5,576.0 713.5,578.0 729.5,579.0 745.5,580.5 761.5,579.0" fill="none" stroke="#ff0000" stroke-width="1" />
<rect x="9" y="614" width="3" height="38" fill="#c0c0c0"/>
<rect x="23" y="624" width="5" height="28" fill="#c0c0c0"/>
<rect x="39" y="632" width="5" height="20" fill="#c0c0c0"/>
<rect x="55" y="633" width="5" height="19" fill="#c0c0c0"/>
<rect x="71" y="638" width="5" height="14" fill="#c0c0c0"/>
<rect x="87" y="640" width="5" height="12" fill="#c0c0c0"/>
<rect x="103" y="640" width="5" height="12" fill="#c0c0c0"/>
<rect x="119" y="638" width="5" height="14" fill="#c0c0c0"/>
<rect x="135" y="635" width="5" height="17" fill="#c0c0c0"/>
<rect x="151" y="636" width="5" height="16" fill="#c0c0c0"/>
<rect x="167" y="632" width="5" height="20" fill="#c0c0c0"/>
<rect x="183" y="631" width="5" height="21" fill="#c0c0c0"/>
<rect x="199" y="630" width="5" height="22" fill="#c0c0c0"/>
<rect x="215" y="629" width="5" height="23" fill="#c0c0c0"/>
<rect x="231" y="631" width="5" height="21" fill="#c0c0c0"/>
<rect x="247" y="630" width="5" height="22" fill="#c0c0c0"/>
<rect x="263" y="632" width="5" height="20" fill="#c0c0c0"/>
<rect x="279" y="634" width="5" height="18" fill="#c0c0c0"/>
<rect x="295" y="634" width="5" height="18" fill="#c0c0c0"/>
<rect x="311" y="628" width="5" height="24" fill="#c0c0c0"/>
<rect x="327" y="619" width="5" height="33" fill="#c0c0c0"/>
<rect x="343" y="611" width="5" height="41" fill="#c0c0c0"/>
<rect x="359" y="604" width="5" height="48" fill="#c0c0c0"/>
<rect x="375" y="604" width="5" height="48" fill="#c0c0c0"/>
<rect x="391" y="608" width="5" height="44" fill="#c0c0c0"/>
<rect x="407" y="616" width="5" height="36" fill="#c0c0c0"/>
<rect x="423" y="624" width="5" height="28" fill="#c0c0c0"/>
<rect x="439" y="629" width="5" height="23" fill="#c0c0c0"/>
<rect x="455" y="631" width="5" height="21" fill="#c0c0c0"/>
<rect x="471" y="635" width="5" height="17" fill="#c0c0c0"/>
<rect x="487" y="642" width="5" height="10" fill="#c0c0c0"/>
<rect x="503" y="643" width="5" height="9" fill="#c0c0c0"/>
<rect x="519" y="645" width="5" height="7" fill="#c0c0c0"/>
<rect x="535" y="646" width="5" height="6" fill="#c0c0c0"/>
<rect x="551" y="648" width="5" height="4" fill="#c0c0c0"/>
<rect x="567" y="651" width="5" height="1" fill="#c0c0c0"/>
<rect x="583" y="653" width="5" height="3" fill="#c0c0c0"/>
<rect x="599" y="653" width="5" height="9" fill="#c0c0c0"/>
<rect x="615" y="653" width="5" height="13" fill="#c0c0c0"/>
<rect x="631" y="653" width="5" height="16" fill="#c0c0c0"/>
<rect x="647" y="653" width="5" height="18" fill="#c0c0c0"/>
<rect x="663" y="653" width="5" height="22" fill="#c0c0c0"/>
<rect x="679" y="653" width="5" height="23" fill="#c0c0c0"/>
<rect x="695" y="653" width="5" height="22" fill="#c0c0c0"/>
<rect x="711" y="653" width="5" height="19" fill="#c0c0c0"/>
<rect x="727" y="653" width="5" height="17" fill="#c0c0c0"/>
<rect x="743" y="653" width="5" height="12" fill="#c0c0c0"/>
<rect x="759" y="653" width="5" height="8" fill="#c0c0c0"/>
<rect x="9" y="652" width="977" height="1" fill="#dc143c"/>
<polyline points="9.5,595.6 25.5,601.9 41.5,606.0 57.5,611.5 73.5,615.9 89.5,621.2 105.5,625.7 121.5,629.2 137.5,632.2 153.5,634.9 169.5,636.3 185.5,636.3 201.5,635.5 217.5,635.3 233.5,634.2 249.5,633.4 265.5,632.4 281.5,632.4 297.5,631.4 313.5,631.4 329.5,630.2 345.5,628.3 361.5,625.1 377.5,622.2 393.5,619.6 409.5,618.4 425.5,617.0 441.5,616.4 457.5,617.0 473.5,618.4 489.5,621.6 505.5,626.7 521.5,630.2 537.5,634.2 553.5,638.3 569.5,641.4 585.5,644.0 601.5,647.1 617.5,650.5 633.5,653.8 649.5,656.8 665.5,660.3 681.5,663.0 697.5,666.0 713.5,668.0 729.5,669.0 745.5,670.5 761.5,669.0" fill="none" stroke="#ff0000" stroke-width="1" />
<rect x="729" y="109" width="1" height="569" fill="#ff0000"/>
<rect x="987" y="128" width="2" height="1" fill="#fff"/>
<rect x="987" y="160" width="2" height="1" fill="#fff"/>
<rect x="987" y="192" width="2" height="1" fill="#fff"/>
<rect x="987" y="224" width="2" height="1" fill="#fff"/>
<rect x="987" y="256" width="2" height="1" fill="#fff"/>
<rect x="987" y="288" width="2" height="1" fill="#fff"/>
<rect x="987" y="294" width="1" height="1" fill="#fff"/>
<rect x="987" y="384" width="1" height="1" fill="#fff"/>
<rect x="987" y="389" width="1" height="1" fill="#fff"/>
<rect x="987" y="497" width="1" height="1" fill="#fff"/>
<rect x="987" y="502" width="1" height="1" fill="#fff"/>
<rect x="987" y="588" width="1" height="1" fill="#fff"/>
<rect x="987" y="593" width="1" height="1" fill="#fff"/>
<rect x="987" y="677" width="1" height="1" fill="#fff"/>
<rect x="9" y="679" width="1" height="2" fill="#fff"/>
<rect x="73" y="679" width="1" height="2" fill="#fff"/>
<rect x="137" y="679" width="1" height="2" fill="#fff"/>
<rect x="201" y="679" width="1" height="2" fill="#fff"/>
<rect x="265" y="679" width="1" height="2" fill="#fff"/>
<rect x="329" y="679" width="1" height="2" fill="#fff"/>
<rect x="393" y="679" width="1" height="2" fill="#fff"/>
<rect x="457" y="679" width="1" height="2" fill="#fff"/>
<rect x="521" y="679" width="1" height="2" fill="#fff"/>
<rect x="585" y="679" width="1" height="2" fill="#fff"/>
<rect x="649" y="679" width="1" height="2" fill="#fff"/>
<rect x="713" y="679" width="1" height="2" fill="#fff"/>
<rect x="989" y="191" width="34" height="11" fill="#fff"/>
<rect x="989" y="456" width="34" height="11" fill="#dc143c"/>
<rect x="989" y="556" width="37" height="11" fill="#dc143c"/>
<rect x="989" y="646" width="34" height="11" fill="#dc143c"/>
<rect x="987" y="462" width="1" height="1" fill="#fff"/>
<rect x="987" y="562" width="1" height="1" fill="#fff"/>
<rect x="987" y="652" width="1" height="1" fill="#fff"/>
<rect x="690" y="682" width="78" height="11" fill="#ff0000"/>
</svg>
<div class="t ct" style="left:12.3px;top:110px;color:#fff;letter-spacing:-0.14px">GBPUSD,Daily</div>
<div class="t ct" style="left:82.8px;top:110px;color:#fff;letter-spacing:-0.235px">1.6488 1.6591 1.6454 1.6542</div>
<div class="t ct" style="left:12.1px;top:296px;color:#fff;letter-spacing:-0.192px">RSI(14) 56.2631</div>
<div class="t ct" style="left:86.5px;top:296px;color:#fff;letter-spacing:-0.159px">Sto(5,3,3) 79.1883 79.3934</div>
<div class="t ct" style="left:12.1px;top:391px;color:#fff;letter-spacing:-0.163px">MACD(12,26,9) -0.00197 -0.00390 0.00193</div>
<div class="t ct" style="left:12.1px;top:504px;color:#fff;letter-spacing:-0.149px">MACD(12,26,9) -0.00197 -0.00523</div>
<div class="t ct" style="left:12.1px;top:595px;color:#fff;letter-spacing:-0.149px">MACD(12,26,9) -0.00197 -0.00523</div>
<div class="t ct" style="left:992.3px;top:121px;color:#fff;letter-spacing:-0.508px">1.6980</div>
<div class="t ct" style="left:992.3px;top:153px;color:#fff;letter-spacing:-0.508px">1.6775</div>
<div class="t ct" style="left:992.3px;top:185px;color:#fff;letter-spacing:-0.508px">1.6570</div>
<div class="t ct" style="left:992.3px;top:217px;color:#fff;letter-spacing:-0.508px">1.6370</div>
<div class="t ct" style="left:992.3px;top:249px;color:#fff;letter-spacing:-0.508px">1.6165</div>
<div class="t ct" style="left:992.3px;top:281px;color:#fff;letter-spacing:-0.508px">1.5960</div>
<div class="t ct" style="left:990.4px;top:293px;color:#fff;letter-spacing:-0.986px">100</div>
<div class="t ct" style="left:988.3px;top:315px;color:#fff;letter-spacing:-0.581px">70</div>
<div class="t ct" style="left:988.3px;top:333px;color:#fff;letter-spacing:-0.581px">50</div>
<div class="t ct" style="left:988.3px;top:351px;color:#fff;letter-spacing:-0.581px">30</div>
<div class="t ct" style="left:989.3px;top:372px;color:#fff;letter-spacing:0px">0</div>
<div class="t ct" style="left:989.3px;top:388px;color:#fff;letter-spacing:-0.289px">0.01877</div>
<div class="t ct" style="left:990.3px;top:485px;color:#fff;letter-spacing:-0.393px">-0.00888</div>
<div class="t ct" style="left:989.8px;top:501px;color:#fff;letter-spacing:-0.389px">0.01902</div>
<div class="t ct" style="left:989.8px;top:576px;color:#fff;letter-spacing:-0.36px">-0.0082</div>
<div class="t ct" style="left:989.8px;top:592px;color:#fff;letter-spacing:-0.389px">0.01902</div>
<div class="t ct" style="left:989.8px;top:665px;color:#fff;letter-spacing:-0.36px">-0.0082</div>
<div class="t ct" style="left:226.1px;top:681px;color:#ff6464;letter-spacing:0.512px">period</div>
<div class="t ct" style="left:263.2px;top:681px;color:#fff;letter-spacing:-0.279px">28 Jul 2009</div>
<div class="t ct" style="left:327.5px;top:681px;color:#fff;letter-spacing:-0.137px">3 Aug 2009</div>
<div class="t ct" style="left:391.5px;top:681px;color:#fff;letter-spacing:-0.137px">7 Aug 2009</div>
<div class="t ct" style="left:455.2px;top:681px;color:#fff;letter-spacing:-0.112px">13 Aug 2009</div>
<div class="t ct" style="left:519.2px;top:681px;color:#fff;letter-spacing:-0.112px">19 Aug 2009</div>
<div class="t ct" style="left:583.2px;top:681px;color:#fff;letter-spacing:-0.112px">25 Aug 2009</div>
<div class="t ct" style="left:647.7px;top:681px;color:#fff;letter-spacing:-0.105px">31 Aug 20</div>
<div class="t ct" style="left:992.5px;top:190px;color:#000;letter-spacing:-0.428px;-webkit-text-stroke:0.35px">1.6542</div>
<div class="t ct" style="left:989.5px;top:455px;color:#000;letter-spacing:-0.339px;-webkit-text-stroke:0.35px">0.00000</div>
<div class="t ct" style="left:989.5px;top:455px;color:#fff;letter-spacing:-0.339px">0.00</div>
<div class="t ct" style="left:989.5px;top:555px;color:#000;letter-spacing:-0.339px;-webkit-text-stroke:0.35px">0.00000</div>
<div class="t ct" style="left:989.5px;top:555px;color:#fff;letter-spacing:-0.339px">0.00</div>
<div class="t ct" style="left:989.5px;top:645px;color:#000;letter-spacing:-0.339px;-webkit-text-stroke:0.35px">0.00000</div>
<div class="t ct" style="left:989.5px;top:645px;color:#fff;letter-spacing:-0.339px">0.00</div>
<div class="t ct" style="left:692.5px;top:681px;color:#000;letter-spacing:-0.215px;-webkit-text-stroke:0.35px">2009.09.07 00:00</div>
<!-- lines under chart -->
<div class="abs" style="left:6px;top:696px;width:1022px;height:2px;background:#fffff6"></div>
<div class="abs" style="left:4px;top:698px;width:1024px;height:1px;background:#000"></div>
<!-- tab bar -->
<div class="abs" style="left:4px;top:699px;width:1024px;height:20px;background:#ece9d8"></div>
<div class="abs" style="left:4px;top:699px;width:2px;height:18px;background:#8d8a7a"></div>
<div class="abs" style="left:4px;top:718px;width:1024px;height:1px;background:#fff"></div>
<!-- active tab -->
<div class="abs" style="left:540px;top:696px;width:88px;height:21px;background:#fff;border:1px solid #000;border-top:none;border-right-width:2px;border-bottom-width:2px;box-sizing:border-box"></div>
<div class="tsep" style="left:96px"></div>
<div class="tsep" style="left:176px"></div>
<div class="tsep" style="left:264px"></div>
<div class="tsep" style="left:364px"></div>
<div class="tsep" style="left:452px"></div>


<div class="tsep" style="left:708px"></div>
<div class="tsep" style="left:784px"></div>
<div class="tsep" style="left:864px"></div>
<div class="tsep" style="left:948px"></div>

<svg class="abs" style="left:998px;top:703px" width="26" height="11" viewBox="0 0 26 11"><path d="M5.500 1.500 L1.500 5.500 L5.500 9.500Z" fill="#aaa79a"/><path d="M18.500 1.500 L22.500 5.500 L18.500 9.500Z" fill="#000"/></svg>
<!-- status bar -->
<div class="abs" style="left:4px;top:719px;width:1024px;height:20px;background:#ece9d8"></div>
<div class="abs" style="left:4px;top:719px;width:1024px;height:1px;background:#f6f4ea"></div>
<div class="ssep" style="left:315px"></div><div class="ssep" style="left:421px"></div><div class="ssep" style="left:524px"></div>
<div class="ssep" style="left:593px"></div><div class="ssep" style="left:663px"></div><div class="ssep" style="left:731px"></div>
<div class="ssep" style="left:800px"></div><div class="ssep" style="left:866px"></div>
<svg class="abs" style="left:872px;top:724px" width="24" height="12" viewBox="0 0 24 12" shape-rendering="crispEdges">
<g fill="#6a8a10"><rect x="0" y="0" width="2" height="9"/><rect x="3" y="0" width="2" height="8"/><rect x="6" y="0" width="2" height="7"/><rect x="9" y="0" width="2" height="6"/><rect x="12" y="0" width="2" height="5"/><rect x="15" y="0" width="2" height="4"/><rect x="18" y="0" width="2" height="3"/><rect x="21" y="0" width="2" height="2"/></g>
<g fill="#10406a"><rect x="0" y="10" width="2" height="2"/><rect x="3" y="9" width="2" height="3"/><rect x="6" y="8" width="2" height="4"/><rect x="9" y="7" width="2" height="5"/><rect x="12" y="6" width="2" height="6"/><rect x="15" y="5" width="2" height="7"/><rect x="18" y="4" width="2" height="8"/><rect x="21" y="3" width="2" height="9"/></g></svg>
<svg class="abs" style="left:1012px;top:724px" width="15" height="15" viewBox="0 0 15 15"><path d="M14 2 L2 14 M14 6 L6 14 M14 10 L10 14" stroke="#b8b5a5" stroke-width="1.500"/><path d="M15 3 L3 15 M15 7 L7 15 M15 11 L11 15" stroke="#fff" stroke-width="1"/></svg>
<!-- taskbar strip -->
<div class="abs" style="left:4px;top:739px;width:1024px;height:4px;background:linear-gradient(#1a5ce8,#0a40c8)"></div>
<div class="abs" style="left:948px;top:742px;width:80px;height:1px;background:#2a8a3a"></div>

<div class="t ui" style="left:29.5px;top:33px;color:#000;letter-spacing:-0.245px">File</div>
<div class="t ui" style="left:61.0px;top:33px;color:#000;letter-spacing:0.281px">View</div>
<div class="t ui" style="left:100.5px;top:33px;color:#000;letter-spacing:-0.103px">Insert</div>
<div class="t ui" style="left:143.0px;top:33px;color:#000;letter-spacing:-0.281px">Charts</div>
<div class="t ui" style="left:188.5px;top:33px;color:#000;letter-spacing:0.328px">Tools</div>
<div class="t ui" style="left:230.5px;top:33px;color:#000;letter-spacing:0.275px">Window</div>
<div class="t ui" style="left:286.0px;top:33px;color:#000;letter-spacing:0.125px">Help</div>
<div class="t ui" style="left:261.1px;top:58px;color:#000;letter-spacing:-0.211px">New Order</div>
<div class="t ui" style="left:371.8px;top:58px;color:#000;letter-spacing:-0.194px">Expert Advisors</div>
<div class="t tab" style="left:19.1px;top:700px;color:#7c7a70;letter-spacing:-0.365px">EURUSD,M30</div>
<div class="t tab" style="left:107.3px;top:700px;color:#7c7a70;letter-spacing:-0.623px">GBPUSD,H1</div>
<div class="t tab" style="left:187.1px;top:700px;color:#7c7a70;letter-spacing:-0.365px">EURUSD,M15</div>
<div class="t tab" style="left:272.9px;top:700px;color:#7c7a70;letter-spacing:-0.011px">USDCHF,Weekly</div>
<div class="t tab" style="left:374.2px;top:700px;color:#7c7a70;letter-spacing:-0.132px">AUDCAD,M30</div>
<div class="t tab" style="left:462.3px;top:700px;color:#7c7a70;letter-spacing:-0.254px">AUDUSD,M30</div>
<div class="t tab" style="left:549.9px;top:700px;color:#000;letter-spacing:-0.328px">GBPUSD,Daily</div>
<div class="t tab" style="left:638.0px;top:700px;color:#7c7a70;letter-spacing:-0.418px">EURUSD,M5</div>
<div class="t tab" style="left:718.1px;top:700px;color:#7c7a70;letter-spacing:-0.128px">USDJPY,H4</div>
<div class="t tab" style="left:794.2px;top:700px;color:#7c7a70;letter-spacing:-0.386px">AUDUSD,H1</div>
<div class="t tab" style="left:873.0px;top:700px;color:#7c7a70;letter-spacing:-0.24px">GBPJPY,Daily</div>
<div class="t tab" style="left:957.9px;top:700px;color:#7c7a70;letter-spacing:-0.586px">USDCH</div>
<div class="t ui" style="left:5.8px;top:722px;color:#000;letter-spacing:-0.335px">For Help, press F1</div>
<div class="t ui" style="left:321.3px;top:722px;color:#000;letter-spacing:-0.06px">Default</div>
<div class="t ui" style="left:921.9px;top:722px;color:#000;letter-spacing:0.53px">115/1 kb</div>
<div class="t pe" style="left:320.0px;top:86px;color:#444;letter-spacing:-0.356px">M1</div>
<div class="t pe" style="left:348.1px;top:86px;color:#444;letter-spacing:-0.756px">M5</div>
<div class="t pe" style="left:374.2px;top:86px;color:#444;letter-spacing:-0.764px">M15</div>
<div class="t pe" style="left:401.5px;top:86px;color:#444;letter-spacing:-0.414px">M30</div>
<div class="t pe" style="left:433.0px;top:86px;color:#444;letter-spacing:-0.531px">H1</div>
<div class="t pe" style="left:460.0px;top:86px;color:#444;letter-spacing:0.469px">H4</div>
<div class="t pe" style="left:489.0px;top:86px;color:#444;letter-spacing:-0.531px">D1</div>
<div class="t pe" style="left:516.2px;top:86px;color:#444;letter-spacing:0.419px">W1</div>
<div class="t pe" style="left:543.0px;top:86px;color:#444;letter-spacing:0.256px">MN</div>
<div class="t ttl" style="left:26.6px;top:10px;color:#fff;letter-spacing:0.584px;text-shadow:1px 1px 0 #0a246a">7258313: FXDD - MetaTrader - Demo Account - [GBPUSD,Daily]</div>
</body></html>
